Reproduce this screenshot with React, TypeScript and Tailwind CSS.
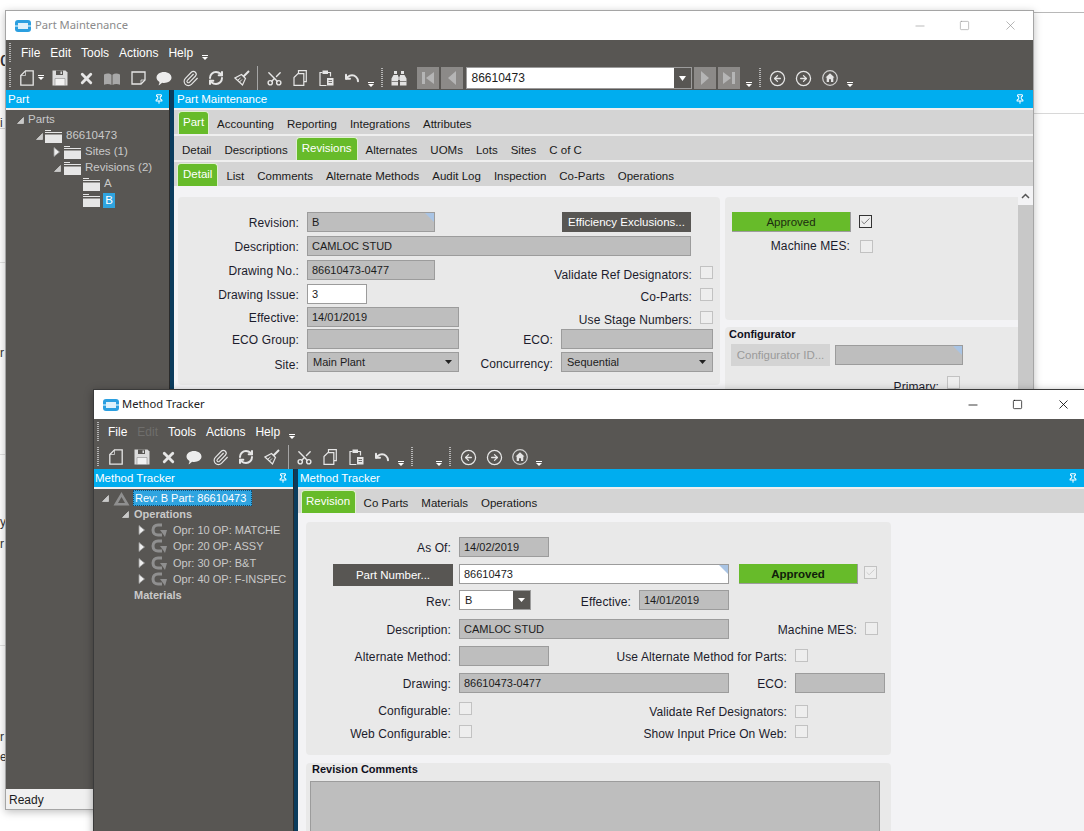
import React from 'react';
import { Paperclip, RefreshCw, Scissors, Undo, X, Minus, Square, Pin, Check, CircleArrowLeft, CircleArrowRight } from 'lucide-react';

function Logo() {
  return (
    <svg width="16" height="14" viewBox="0 0 16 14">
      <rect x="0" y="1" width="16" height="12" rx="3" fill="#2b9fe0" />
      <rect x="3" y="4" width="10" height="6" fill="#dff1fb" />
      <rect x="0" y="6" width="3" height="2" fill="#8fd0f2" />
      <rect x="13" y="6" width="3" height="2" fill="#8fd0f2" />
    </svg>
  );
}

function Grip() {
  return <div className="w-[2px] h-[20px] shrink-0 bg-[repeating-linear-gradient(to_bottom,#b5b5b5_0,#b5b5b5_1px,#585653_1px,#585653_2px)]" />;
}

function DropArrow({ className = '' }: { className?: string }) {
  return (
    <svg width="6" height="5" viewBox="0 0 6 5" className={`shrink-0 self-end mb-[3px] ${className}`}>
      <rect x="0" y="0" width="6" height="1" fill="#fff" />
      <path d="M0 2h6L3 5z" fill="#fff" />
    </svg>
  );
}

function Slot({ children }: { children: React.ReactNode }) {
  return <div className="w-[26px] h-[20px] shrink-0 flex items-center justify-center text-[#e6e6e6]">{children}</div>;
}

function DocIcon() {
  return (
    <svg width="14" height="16" viewBox="0 0 14 16">
      <path d="M5.500.8h7.700v14.400H.8V5.500z" fill="none" stroke="#e6e6e6" strokeWidth="1.300" />
      <path d="M5.500.8v4.700H.8" fill="none" stroke="#e6e6e6" strokeWidth=".7" />
    </svg>
  );
}

function SaveIcon() {
  return (
    <svg width="16" height="16" viewBox="0 0 16 16">
      <path d="M.5.5h13L15.500 2.500v13H.5z" fill="#dcdcdc" />
      <path d="M4 .5h7v4.500H4z" fill="#585653" />
      <path d="M8.500 1.500h1.500v2.500H8.500z" fill="#dcdcdc" />
      <path d="M3 8.500h10v7H3z" fill="#f2f2f2" stroke="#8d8d8d" strokeWidth=".6" />
    </svg>
  );
}

function BookIcon() {
  return (
    <svg width="16" height="15" viewBox="0 0 16 15">
      <path d="M0 3.500c2.500-1.300 5.500-1.300 7.500.3v10.200c-2-1.300-5-1.300-7.500-.3z" fill="#a8a8a8" />
      <path d="M16 3.500c-2.500-1.300-5.500-1.300-7.500.3v10.200c2-1.300 5-1.300 7.500-.3z" fill="#a8a8a8" />
    </svg>
  );
}

function NoteIcon() {
  return (
    <svg width="15" height="14" viewBox="0 0 15 14">
      <path d="M1 1h13v8l-4 4H1z" fill="none" stroke="#e6e6e6" strokeWidth="1.300" />
      <path d="M14 9h-4v4" fill="none" stroke="#e6e6e6" strokeWidth=".8" />
    </svg>
  );
}

function Bubble() {
  return (
    <svg width="16" height="15" viewBox="0 0 16 15">
      <path d="M8 1c4.200 0 7.500 2.400 7.500 5.600S12.200 12 8 12c-.7 0-1.300 0-1.900-.2C5 13 3.600 14 2.500 14.300c.6-1 1-2.200 1-3.400C1.600 9.900.5 8.400.5 6.600.5 3.400 3.800 1 8 1z" fill="#ececec" />
    </svg>
  );
}

function BroomIcon() {
  return (
    <svg width="16" height="16" viewBox="0 0 16 16">
      <path d="M15 1 9.500 6.500" stroke="#e6e6e6" strokeWidth="2" />
      <path d="M7.500 4.500l4 4-3 6.500L1 8z" fill="none" stroke="#e6e6e6" strokeWidth="1.200" />
      <path d="M4 10l2.500-2M5.500 12l2.500-2.500" stroke="#e6e6e6" strokeWidth="1" />
    </svg>
  );
}

function CopyIcon() {
  return (
    <svg width="14" height="16" viewBox="0 0 14 16">
      <path d="M5.500 3V.7h7.800v11H11" fill="none" stroke="#e6e6e6" strokeWidth="1.200" />
      <path d="M1 7.500 5 3.600h5.800v11.700H1z" fill="none" stroke="#e6e6e6" strokeWidth="1.200" />
    </svg>
  );
}

function ClipboardIcon() {
  return (
    <svg width="15" height="16" viewBox="0 0 15 16">
      <path d="M3.500 2.500H1v13h6.500M9 2.500h2.500v4" fill="none" stroke="#e6e6e6" strokeWidth="1.200" />
      <path d="M3.500.5h5.500v3.500H3.500z" fill="#e6e6e6" />
      <path d="M8 8h6.500v7.500H8z" fill="#e6e6e6" />
      <path d="M9.500 10.500h3.500M9.500 12.500h3.500" stroke="#585653" strokeWidth=".8" />
    </svg>
  );
}

function BinocularsIcon() {
  return (
    <svg width="16" height="15" viewBox="0 0 16 15">
      <path d="M3 0h3v3H3zM10 0h3v3h-3z" fill="#e2e2e2" />
      <path d="M2.500 4H7v10.500H0.500V7.500zM9 4h4.500l2 3.500v7H9z" fill="#e2e2e2" />
      <path d="M7 5.500h2V9H7z" fill="#bdbdbd" />
      <path d="M.5 10.500h6.500M9 10.500h6.500" stroke="#585653" strokeWidth=".7" />
    </svg>
  );
}

function HomeCircle() {
  return (
    <svg width="16" height="16" viewBox="0 0 16 16">
      <circle cx="8" cy="8" r="7.300" fill="none" stroke="#d0d0d0" strokeWidth="1.200" />
      <path d="M8 3.300 12.500 7.500H11.300V12H9V9.300H7V12H4.700V7.500H3.500z" fill="#e4e4e4" />
    </svg>
  );
}

function NavButton({ dir, bar }: { dir: 'l' | 'r'; bar?: boolean }) {
  return (
    <div className="w-[22px] h-[22px] shrink-0 bg-[#8c8a88] flex items-center justify-center">
      <svg width="14" height="14" viewBox="0 0 14 14">
        {dir === 'l' ? (
          <>
            {bar && <rect x="1" y="1" width="3" height="12" fill="#b5b5b5" />}
            <path d={bar ? 'M13 1v12L5 7z' : 'M11 0v14L3 7z'} fill="#b5b5b5" />
          </>
        ) : (
          <>
            {bar && <rect x="10" y="1" width="3" height="12" fill="#b5b5b5" />}
            <path d={bar ? 'M1 1v12l8-6z' : 'M3 0v14l8-7z'} fill="#b5b5b5" />
          </>
        )}
      </svg>
    </div>
  );
}

function EditIcons() {
  return (
    <>
      <Slot><Scissors size={17} className="-rotate-90" /></Slot>
      <Slot><CopyIcon /></Slot>
      <Slot><ClipboardIcon /></Slot>
      <Slot><Undo size={16} strokeWidth={3} /></Slot>
    </>
  );
}

function NavIcons() {
  return (
    <>
      <Slot><CircleArrowLeft size={17} strokeWidth={1.800} /></Slot>
      <Slot><CircleArrowRight size={17} strokeWidth={1.800} /></Slot>
      <Slot><HomeCircle /></Slot>
    </>
  );
}

function Menu({ disabledEdit, className }: { disabledEdit?: boolean; className: string }) {
  return (
    <div className={`h-[26px] flex items-center gap-[10px] text-[12px] text-white ${className}`}>
      <span>File</span>
      <span className={disabledEdit ? 'text-[#6f6e6c]' : ''}>Edit</span>
      <span>Tools</span>
      <span>Actions</span>
      <span>Help</span>
      <DropArrow className="mb-[6px] -ml-[1px]" />
    </div>
  );
}

function BlueBar({ title, className }: { title: string; className: string }) {
  return (
    <div className={`h-[18px] bg-[#00adef] text-white text-[11.500px] flex items-center justify-between ${className}`}>
      <span className="pt-[1px]">{title}</span>
      <Pin size={10} strokeWidth={2.500} />
    </div>
  );
}

function Tab({ label, active, className = '' }: { label: string; active?: boolean; className?: string }) {
  if (active) {
    return (
      <div className={`h-[23px] self-end flex items-start pt-[2px] mx-[1.500px] bg-[#67bb2a] border border-b-0 border-[#dff0d0] rounded-t-[4px] text-white ${className}`}>
        {label}
      </div>
    );
  }
  return <div className="px-[6.500px] pt-[5px]">{label}</div>;
}

function TabRow({ children, className = '' }: { children: React.ReactNode; className?: string }) {
  return <div className={`h-[24px] bg-[#d4d4d4] flex items-center text-[11.500px] text-[#1a1a1a] ${className}`}>{children}</div>;
}

function Label({ children, className }: { children: React.ReactNode; className: string }) {
  return <div className={`shrink-0 text-right text-[12px] leading-[22px] tracking-[0.1px] text-[#1c1c2c] ${className}`}>{children}</div>;
}

function Corner() {
  return (
    <svg width="9" height="9" viewBox="0 0 9 9" className="absolute top-0 right-0">
      <path d="M0 0h9v9z" fill="#a9c4e4" />
    </svg>
  );
}

function Field({ value, className, corner, white }: { value?: string; className: string; corner?: boolean; white?: boolean }) {
  return (
    <div className={`relative h-[20px] shrink-0 border border-[#9c9c9c] pl-[4px] text-[11px] leading-[19px] text-[#1c1c1c] ${white ? 'bg-white' : 'bg-[#bebebe]'} ${className}`}>
      {value}
      {corner && <Corner />}
    </div>
  );
}

function SelectField({ value, className }: { value: string; className: string }) {
  return (
    <div className={`h-[20px] shrink-0 border border-[#9c9c9c] bg-[#bebebe] pl-[5px] pr-[6px] flex items-center justify-between text-[11px] text-[#1c1c1c] ${className}`}>
      <span>{value}</span>
      <svg width="7" height="4" viewBox="0 0 7 4"><path d="M0 0h7L3.500 4z" fill="#222" /></svg>
    </div>
  );
}

function CheckBox({ className = '', checked, dim }: { className?: string; checked?: boolean; dim?: boolean }) {
  return (
    <div className={`w-[13px] h-[13px] shrink-0 bg-[#eeeeee] border flex items-center justify-center ${checked && !dim ? 'border-[#333]' : 'border-[#c2c2c2]'} ${className}`}>
      {checked && <Check size={11} strokeWidth={1.500} className={dim ? 'text-[#bdbdbd]' : 'text-[#444]'} />}
    </div>
  );
}

function Row({ children, className = '' }: { children: React.ReactNode; className?: string }) {
  return <div className={`h-[20px] flex items-start ${className}`}>{children}</div>;
}

function Expanded() {
  return (
    <svg width="7" height="7" viewBox="0 0 7 7" className="shrink-0">
      <path d="M6.500.5v6H.5z" fill="#c9c9c9" stroke="#e0e0e0" strokeWidth=".6" />
    </svg>
  );
}

function Collapsed() {
  return (
    <svg width="7" height="10" viewBox="0 0 7 10" className="shrink-0">
      <path d="M1 .5 6.500 5 1 9.500z" fill="#eee" stroke="#9a9a9a" strokeWidth=".8" />
    </svg>
  );
}

function Folder() {
  return (
    <svg width="17" height="14" viewBox="0 0 17 14" className="shrink-0">
      <path d="M0 1h6v1H0z" fill="#e6e6e6" />
      <path d="M0 3h17v1H0z" fill="#e6e6e6" />
      <path d="M0 5.500h17V14H0z" fill="#e6e6e6" />
    </svg>
  );
}

function GArrow() {
  return (
    <svg width="17" height="15" viewBox="0 0 17 15" className="shrink-0">
      <path d="M11 2H7C4 2 2 4 2 7s2 5 5 5h4" fill="none" stroke="#8f8f8f" strokeWidth="3" />
      <path d="M9 7h7l-2 7-2-3z" fill="#8f8f8f" />
    </svg>
  );
}

function TreeText({ children, className = '' }: { children: React.ReactNode; className?: string }) {
  return <span className={`text-[#c9c9c9] whitespace-nowrap ${className}`}>{children}</span>;
}

function OprRow({ label, className }: { label: string; className: string }) {
  return (
    <div className={`flex items-center pl-[44px] ${className}`}>
      <Collapsed />
      <div className="ml-[6px]"><GArrow /></div>
      <TreeText className="ml-[5px]">{label}</TreeText>
    </div>
  );
}

function PartWindow() {
  return (
    <div className="absolute left-[5px] top-[10px] w-[1029px] h-[800px] flex flex-col bg-white border border-[#a5a5a5] shadow-[0_2px_8px_rgba(0,0,0,0.25)]">
      <div className="h-[29px] shrink-0 bg-white flex items-center pl-[9px] text-[#8b8b8b]">
        <Logo />
        <span className="ml-[4px] text-[11.200px] font-['Noto_Sans',sans-serif]">Part Maintenance</span>
        <div className="ml-auto flex items-center text-[#8b8b8b]">
          <Minus size={14} strokeWidth={1} />
          <Square size={11} strokeWidth={1.200} className="ml-[32px]" />
          <X size={15} strokeWidth={1} className="ml-[33px] mr-[15px]" />
        </div>
      </div>

      <div className="h-[50px] shrink-0 bg-[#585653]">
        <div className="flex items-center pl-[3px] h-[26px]">
          <Grip />
          <Menu className="ml-[10px]" />
        </div>
        <div className="flex items-center h-[24px] pl-[3px]">
          <Grip />
          <div className="ml-[5px] w-[22px] h-[20px] flex items-center justify-center"><DocIcon /></div>
          <DropArrow className="mb-[10px]" />
          <div className="ml-[3px] flex">
            <Slot><SaveIcon /></Slot>
            <Slot><X size={17} strokeWidth={4} /></Slot>
            <Slot><BookIcon /></Slot>
            <Slot><NoteIcon /></Slot>
            <Slot><Bubble /></Slot>
            <Slot><Paperclip size={17} strokeWidth={1.600} /></Slot>
            <Slot><RefreshCw size={16} strokeWidth={3} /></Slot>
            <Slot><BroomIcon /></Slot>
          </div>
          <div className="ml-[2px] w-[1px] h-[24px] bg-[#a5a5a5]" />
          <div className="ml-[3px] flex"><EditIcons /></div>
          <DropArrow className="ml-[3px]" />
          <div className="ml-[7px]"><Grip /></div>
          <div className="ml-[3px]"><Slot><BinocularsIcon /></Slot></div>
          <div className="ml-[5px]"><NavButton dir="l" bar /></div>
          <div className="ml-[2px]"><NavButton dir="l" /></div>
          <div className="ml-[2.500px] w-[226px] h-[22px] bg-white border border-[#9c9c9c] flex items-center justify-between text-[12px] text-[#1c1c1c] pl-[5px]">
            <span>86610473</span>
            <div className="w-[17px] h-full bg-[#585653] flex items-center justify-center">
              <svg width="7" height="5" viewBox="0 0 7 5"><path d="M0 0h7L3.500 5z" fill="#fff" /></svg>
            </div>
          </div>
          <div className="ml-[2px]"><NavButton dir="r" /></div>
          <div className="ml-[2px]"><NavButton dir="r" bar /></div>
          <DropArrow className="ml-[6px]" />
          <div className="ml-[7px]"><Grip /></div>
          <div className="ml-[4px] flex"><NavIcons /></div>
          <DropArrow className="ml-[4px]" />
        </div>
      </div>

      <div className="flex-1 min-h-0 flex font-['Liberation_Sans',sans-serif]">
        <div className="w-[163px] shrink-0 flex flex-col">
          <BlueBar title="Part" className="pl-[2px] pr-[5px]" />
          <div className="h-[2px] bg-[#f0f0f0]" />
          <div className="flex-1 bg-[#585653] pt-[2px] text-[11.500px]">
            <div className="h-[16px] flex items-center pl-[11px]"><Expanded /><TreeText className="ml-[4px]">Parts</TreeText></div>
            <div className="h-[16px] flex items-center pl-[30px]"><Expanded /><div className="ml-[2px]"><Folder /></div><TreeText className="ml-[4px]">86610473</TreeText></div>
            <div className="h-[16px] flex items-center pl-[47px]"><Collapsed /><div className="ml-[4px]"><Folder /></div><TreeText className="ml-[4px]">Sites (1)</TreeText></div>
            <div className="h-[16px] flex items-center pl-[48px]"><Expanded /><div className="ml-[3px]"><Folder /></div><TreeText className="ml-[4px]">Revisions (2)</TreeText></div>
            <div className="h-[16px] flex items-center pl-[77px]"><Folder /><TreeText className="ml-[4px]">A</TreeText></div>
            <div className="h-[16px] flex items-center pl-[77px]"><Folder /><span className="ml-[3px] w-[12px] h-[15px] bg-[#2fa4e0] text-white text-center leading-[15px]">B</span></div>
          </div>
          <div className="h-[20px] bg-[#f0f0f0] text-[12px] text-[#1c1c1c] pl-[3px] leading-[22px]">Ready</div>
        </div>
        <div className="w-[5px] shrink-0 bg-[#0b3c5d] border-l border-[#2a2a2a]" />
        <div className="flex-1 min-w-0 flex flex-col bg-[#efefef]">
          <BlueBar title="Part Maintenance" className="pl-[3px] pr-[8px]" />
          <div className="h-[2px]" />
          <TabRow className="pl-[2.500px]">
            <Tab label="Part" active className="px-[4px]" />
            <Tab label="Accounting" />
            <Tab label="Reporting" />
            <Tab label="Integrations" />
            <Tab label="Attributes" />
          </TabRow>
          <div className="h-[2px]" />
          <TabRow className="pl-[1.500px]">
            <Tab label="Detail" />
            <Tab label="Descriptions" />
            <Tab label="Revisions" active className="px-[5px]" />
            <Tab label="Alternates" />
            <Tab label="UOMs" />
            <Tab label="Lots" />
            <Tab label="Sites" />
            <Tab label="C of C" />
          </TabRow>
          <div className="h-[2px]" />
          <TabRow className="pl-[1.500px]">
            <Tab label="Detail" active className="px-[5px]" />
            <Tab label="List" />
            <Tab label="Comments" />
            <Tab label="Alternate Methods" />
            <Tab label="Audit Log" />
            <Tab label="Inspection" />
            <Tab label="Co-Parts" />
            <Tab label="Operations" />
          </TabRow>

          <div className="flex-1 min-h-0 flex bg-[#f3f3f5]">
            <div className="flex-1 flex gap-[5px] pl-[4px] pt-[11px] items-start">
              <div className="w-[542px] h-[188px] shrink-0 bg-[#e9e9e9] rounded-[4px] pt-[15px]">
                <Row>
                  <Label className="w-[121px]">Revision:</Label>
                  <Field value="B" corner className="ml-[8px] w-[128px]" />
                  <div className="ml-[127px] w-[129px] h-[20px] bg-[#585653] text-white text-[11.500px] leading-[20px] text-center">Efficiency Exclusions...</div>
                </Row>
                <Row className="mt-[4px]">
                  <Label className="w-[121px]">Description:</Label>
                  <Field value="CAMLOC STUD" className="ml-[8px] w-[384px]" />
                </Row>
                <Row className="mt-[4px]">
                  <Label className="w-[121px]">Drawing No.:</Label>
                  <Field value="86610473-0477" className="ml-[8px] w-[128px]" />
                  <Label className="w-[257px] mt-[4px]">Validate Ref Designators:</Label>
                  <CheckBox className="ml-[8px] mt-[6px]" />
                </Row>
                <Row className="mt-[4px]">
                  <Label className="w-[121px]">Drawing Issue:</Label>
                  <Field value="3" white className="ml-[8px] w-[60px]" />
                  <Label className="w-[325px] mt-[2px]">Co-Parts:</Label>
                  <CheckBox className="ml-[8px] mt-[4px]" />
                </Row>
                <Row className="mt-[3px]">
                  <Label className="w-[121px]">Effective:</Label>
                  <Field value="14/01/2019" className="ml-[8px] w-[152px]" />
                  <Label className="w-[233px] mt-[2px]">Use Stage Numbers:</Label>
                  <CheckBox className="ml-[8px] mt-[4px]" />
                </Row>
                <Row className="mt-[2px]">
                  <Label className="w-[121px]">ECO Group:</Label>
                  <Field className="ml-[8px] w-[152px]" />
                  <Label className="w-[94px]">ECO:</Label>
                  <Field className="ml-[8px] w-[152px]" />
                </Row>
                <Row className="mt-[3px]">
                  <Label className="w-[121px] mt-[2px]">Site:</Label>
                  <SelectField value="Main Plant" className="ml-[8px] w-[152px]" />
                  <Label className="w-[94px] mt-[1px]">Concurrency:</Label>
                  <SelectField value="Sequential" className="ml-[8px] w-[152px]" />
                </Row>
              </div>
              <div className="flex-1 flex flex-col gap-[7px]">
                <div className="h-[123px] bg-[#e9e9e9] rounded-l-[4px] pt-[15px]">
                  <Row>
                    <div className="ml-[7px] w-[119px] h-[20px] bg-[#67bb2a] border-b border-r border-[#9c9c9c] text-[11.500px] text-[#1c2c10] text-center leading-[20px]">Approved</div>
                    <CheckBox checked className="ml-[8px] mt-[3px]" />
                  </Row>
                  <Row className="mt-[4px]">
                    <Label className="w-[125px] -mt-[1px]">Machine MES:</Label>
                    <CheckBox className="ml-[10px] mt-[4px]" />
                  </Row>
                </div>
                <div className="h-[80px] bg-[#e9e9e9] rounded-l-[4px] pl-[4px]">
                  <div className="text-[11px] font-bold text-[#10101c] leading-[14px]">Configurator</div>
                  <div className="flex mt-[3px] pl-[2px]">
                    <div className="w-[99px] h-[22px] bg-[#d4d4d4] text-[#9a9a9a] text-[11.500px] leading-[22px] text-center">Configurator ID...</div>
                    <Field corner className="ml-[5px] w-[128px] mt-[1px]" />
                  </div>
                  <Row className="mt-[9px] -ml-[4px]">
                    <Label className="w-[214px] mt-[1px]">Primary:</Label>
                    <CheckBox className="ml-[8px] mt-[1px]" />
                  </Row>
                </div>
              </div>
            </div>
            <div className="w-[15px] shrink-0 bg-[#c8c8c8] flex flex-col">
              <div className="h-[19px] bg-[#f3f3f5] flex items-center justify-center">
                <svg width="9" height="6" viewBox="0 0 9 6"><path d="M1 5l3.500-3.500L8 5" fill="none" stroke="#555" strokeWidth="1.500" /></svg>
              </div>
            </div>
          </div>
        </div>
      </div>
    </div>
  );
}

function TrackerWindow() {
  return (
    <div className="absolute left-[93px] top-[389px] w-[994px] h-[460px] flex flex-col bg-white border border-[#3a3a3a] border-b-0 shadow-[0_2px_8px_rgba(0,0,0,0.35)]">
      <div className="h-[29px] shrink-0 bg-white flex items-center pl-[9px] text-black">
        <Logo />
        <span className="ml-[3px] text-[11.200px] font-['Noto_Sans',sans-serif] text-[#222]">Method Tracker</span>
        <div className="ml-auto flex items-center">
          <Minus size={14} strokeWidth={1.300} />
          <Square size={11} strokeWidth={1.500} className="ml-[32px]" />
          <X size={15} strokeWidth={1.300} className="ml-[33px] mr-[15px]" />
        </div>
      </div>

      <div className="h-[50px] shrink-0 bg-[#585653]">
        <div className="flex items-center pl-[3px] h-[26px]">
          <Grip />
          <Menu disabledEdit className="ml-[9px]" />
        </div>
        <div className="flex items-center h-[24px] pl-[3px]">
          <Grip />
          <div className="ml-[4px] flex">
            <Slot><DocIcon /></Slot>
            <Slot><SaveIcon /></Slot>
            <Slot><X size={17} strokeWidth={4} /></Slot>
            <Slot><Bubble /></Slot>
            <Slot><Paperclip size={17} strokeWidth={1.600} /></Slot>
            <Slot><RefreshCw size={16} strokeWidth={3} /></Slot>
            <Slot><BroomIcon /></Slot>
          </div>
          <div className="ml-[3px] w-[1px] h-[24px] bg-[#a5a5a5]" />
          <div className="ml-[2px] flex"><EditIcons /></div>
          <DropArrow className="ml-[3px]" />
          <div className="ml-[7px]"><Grip /></div>
          <DropArrow className="ml-[23px]" />
          <div className="ml-[7px]"><Grip /></div>
          <div className="ml-[4px] flex"><NavIcons /></div>
          <DropArrow className="ml-[3px]" />
        </div>
      </div>

      <div className="flex-1 min-h-0 flex font-['Liberation_Sans',sans-serif]">
        <div className="w-[199px] shrink-0 flex flex-col">
          <BlueBar title="Method Tracker" className="pl-[1px] pr-[5px]" />
          <div className="h-[2px] bg-[#f0f0f0]" />
          <div className="flex-1 bg-[#585653] text-[11px]">
            <div className="h-[18px] flex items-center pl-[8px]">
              <Expanded />
              <svg width="17" height="15" viewBox="0 0 17 15" className="ml-[4px] shrink-0">
                <path d="M8.500 1 16.500 14.500H.5zM8.500 6 5 12h7z" fill="#8f8f8f" fillRule="evenodd" />
              </svg>
              <span className="ml-[3px] w-[119px] h-[16px] bg-[#2fa4e0] border border-dotted border-[#0d4a70] text-white leading-[14px] pl-[1px] whitespace-nowrap">Rev: B Part: 86610473</span>
            </div>
            <div className="h-[15px] flex items-center pl-[28px]"><Expanded /><TreeText className="ml-[5px] font-bold">Operations</TreeText></div>
            <OprRow label="Opr: 10 OP: MATCHE" className="h-[16px]" />
            <OprRow label="Opr: 20 OP: ASSY" className="h-[17px]" />
            <OprRow label="Opr: 30 OP: B&T" className="h-[16px]" />
            <OprRow label="Opr: 40 OP: F-INSPEC" className="h-[16px]" />
            <div className="h-[16px] flex items-center pl-[40px]"><TreeText className="font-bold">Materials</TreeText></div>
          </div>
        </div>
        <div className="w-[5px] shrink-0 bg-[#0b3c5d] border-l border-[#2a2a2a]" />
        <div className="flex-1 min-w-0 flex flex-col bg-[#efefef]">
          <BlueBar title="Method Tracker" className="pl-[2px] pr-[8px]" />
          <div className="h-[2px]" />
          <TabRow className="pl-[1px]">
            <Tab label="Revision" active className="px-[4.500px]" />
            <Tab label="Co Parts" />
            <Tab label="Materials" />
            <Tab label="Operations" />
          </TabRow>
          <div className="flex-1 min-h-0 bg-[#f3f3f5] pl-[8px] pt-[9px]">
            <div className="w-[585px] h-[233px] bg-[#e9e9e9] rounded-[4px] pt-[15px]">
              <Row>
                <Label className="w-[145px]">As Of:</Label>
                <Field value="14/02/2019" className="ml-[8px] w-[90px]" />
              </Row>
              <Row className="mt-[7px]">
                <div className="ml-[27px] w-[120px] h-[22px] bg-[#585653] text-white text-[11.500px] leading-[22px] text-center shrink-0">Part Number...</div>
                <Field value="86610473" white corner className="ml-[6px] w-[270px]" />
                <div className="ml-[10px] w-[119px] h-[20px] bg-[#67bb2a] border-b border-r border-[#9c9c9c] text-[11.500px] font-bold text-[#10200a] text-center leading-[20px]">Approved</div>
                <CheckBox checked dim className="ml-[6px] mt-[2px]" />
              </Row>
              <Row className="mt-[6px]">
                <Label className="w-[145px] mt-[1px]">Rev:</Label>
                <div className="ml-[8px] w-[72px] h-[20px] bg-white border border-[#9c9c9c] flex items-center justify-between pl-[5px] text-[11px] text-[#1c1c1c]">
                  <span>B</span>
                  <div className="w-[17px] h-full bg-[#585653] flex items-center justify-center">
                    <svg width="7" height="4" viewBox="0 0 7 4"><path d="M0 0h7L3.500 4z" fill="#fff" /></svg>
                  </div>
                </div>
                <Label className="w-[100px] mt-[1px]">Effective:</Label>
                <Field value="14/01/2019" className="ml-[8px] w-[90px]" />
              </Row>
              <Row className="mt-[9px]">
                <Label className="w-[145px]">Description:</Label>
                <Field value="CAMLOC STUD" className="ml-[8px] w-[270px]" />
                <Label className="w-[128px]">Machine MES:</Label>
                <CheckBox className="ml-[8px] mt-[3px]" />
              </Row>
              <Row className="mt-[7px]">
                <Label className="w-[145px]">Alternate Method:</Label>
                <Field className="ml-[8px] w-[90px]" />
                <Label className="w-[238px]">Use Alternate Method for Parts:</Label>
                <CheckBox className="ml-[8px] mt-[3px]" />
              </Row>
              <Row className="mt-[7px]">
                <Label className="w-[145px]">Drawing:</Label>
                <Field value="86610473-0477" className="ml-[8px] w-[270px]" />
                <Label className="w-[58px]">ECO:</Label>
                <Field className="ml-[8px] w-[90px]" />
              </Row>
              <Row className="mt-[9px]">
                <Label className="w-[145px] -mt-[2px]">Configurable:</Label>
                <CheckBox className="ml-[8px]" />
                <Label className="w-[315px] -mt-[1px]">Validate Ref Designators:</Label>
                <CheckBox className="ml-[8px] mt-[3px]" />
              </Row>
              <Row className="mt-[3px]">
                <Label className="w-[145px] -mt-[2px]">Web Configurable:</Label>
                <CheckBox className="ml-[8px]" />
                <Label className="w-[315px] -mt-[2px]">Show Input Price On Web:</Label>
                <CheckBox className="ml-[8px]" />
              </Row>
            </div>
            <div className="mt-[8px] w-[585px] h-[80px] bg-[#e9e9e9] rounded-t-[4px] pl-[4px] pr-[11px]">
              <div className="pl-[2px] text-[11px] font-bold text-[#10101c] leading-[13px]">Revision Comments</div>
              <div className="mt-[5px] h-[60px] bg-[#bebebe] border border-[#9c9c9c]" />
            </div>
          </div>
        </div>
      </div>
    </div>
  );
}

export default function App() {
  return (
    <div className="relative w-[1084px] h-[831px] overflow-hidden bg-white font-['Liberation_Sans',sans-serif]">
      {/* page behind the two windows, only its edges show */}
      <div className="absolute left-0 top-[128px] w-[6px] h-[1px] bg-[#d8d8d8]" />
      <div className="absolute left-0 top-[262px] w-[6px] h-[1px] bg-[#e2e2e2]" />
      <div className="absolute left-0 top-[454px] w-[6px] h-[1px] bg-[#e2e2e2]" />
      <div className="absolute left-0 top-[645px] w-[6px] h-[1px] bg-[#e2e2e2]" />
      <div className="absolute left-[1033px] top-[12px] w-[51px] h-[1px] bg-[#b8b8b8]" />
      <div className="absolute left-[1033px] top-[113px] w-[51px] h-[1px] bg-[#d8d8d8]" />
      <span className="absolute left-0 top-[44px] text-[20px] text-[#333]">d</span>
      <span className="absolute left-0 top-[114px] text-[12px] text-[#333]">i</span>
      <span className="absolute left-0 top-[344px] text-[12px] text-[#333]">r</span>
      <span className="absolute left-0 top-[513px] text-[12px] text-[#333]">y</span>
      <span className="absolute left-0 top-[535px] text-[12px] text-[#333]">r</span>
      <span className="absolute left-0 top-[728px] text-[12px] text-[#333]">r</span>
      <span className="absolute left-0 top-[748px] text-[12px] text-[#333]">e</span>
      <PartWindow />
      <TrackerWindow />
    </div>
  );
}
